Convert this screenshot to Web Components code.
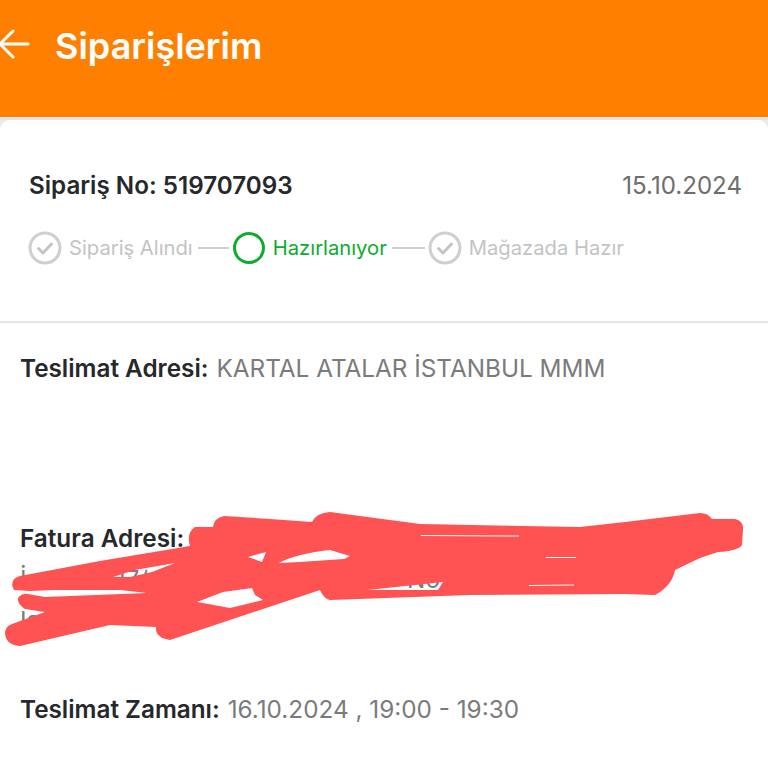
<!DOCTYPE html>
<html lang="tr">
<head>
<meta charset="utf-8">
<title>Siparişlerim</title>
<style>
  html, body { margin: 0; height: 100%; background: #fff; }
  body { font-family: Inter, "Liberation Sans", sans-serif; overflow: hidden; }
</style>
</head>
<body>
<app-page>
  <app-header>Siparişlerim</app-header>
  <order-summary number="519707093" date="15.10.2024">
    <order-step state="done">Sipariş Alındı</order-step>
    <order-step state="active" style="--join:31px">Hazırlanıyor</order-step>
    <order-step state="done">Mağazada Hazır</order-step>
  </order-summary>
  <order-info>
    <info-row label="Teslimat Adresi:" style="--row-height:170px">KARTAL ATALAR İSTANBUL MMM</info-row>
    <info-row label="Fatura Adresi:" style="--row-height:171px">
      <span style="display:flex;width:420px;justify-content:space-between"><span>İ</span><span style="margin-right:170px">17/</span><span>No</span></span>
      <span style="display:block">Is</span>
    </info-row>
    <info-row label="Teslimat Zamanı:">16.10.2024 , 19:00 - 19:30</info-row>
  </order-info>
  <scribble-mark></scribble-mark>
</app-page>

<script>
const check_icon = `
  <svg width="34" height="34" viewBox="0 0 34 34" fill="none">
    <circle cx="17" cy="17" r="15" stroke="#cfcfcf" stroke-width="3"/>
    <path d="M10.5 17.5l4.5 4.5 8.5-9" stroke="#c4c4c4" stroke-width="3" stroke-linecap="round" stroke-linejoin="round"/>
  </svg>`;
const ring_icon = `
  <svg width="34" height="34" viewBox="0 0 34 34" fill="none">
    <circle cx="17" cy="17" r="14.5" stroke="#0aad2c" stroke-width="3"/>
  </svg>`;

class AppPage extends HTMLElement {
  constructor() {
    super();
    this.attachShadow({ mode: "open" }).innerHTML = `
      <style>
        :host { display: block; position: relative; width: 768px; height: 768px; overflow: hidden; background: #fff; }
      </style>
      <slot></slot>`;
  }
}

class AppHeader extends HTMLElement {
  constructor() {
    super();
    this.attachShadow({ mode: "open" }).innerHTML = `
      <style>
        :host { display: block; }
        .bar {
          height: 117px; background: #ff8000; color: #fff;
          display: flex; align-items: flex-start; gap: 25px;
          padding: 24px 0 0 0; box-sizing: border-box;
        }
        svg { margin: 5px 0 0 -1px; flex: none; }
        h1 { margin: 0; font: 600 36px/44px Inter, "Liberation Sans", sans-serif; }
        .edge { height: 3px; background: #e4e4e4; }
      </style>
      <div class="bar">
        <svg width="31" height="30" viewBox="0 0 31 30" fill="none" stroke="#fff" stroke-width="3" stroke-linecap="round" stroke-linejoin="round">
          <path d="M29 15H1M14 2L1 15l13 13"/>
        </svg>
        <h1><slot></slot></h1>
      </div>
      <div class="edge"></div>`;
  }
}

class OrderSummary extends HTMLElement {
  constructor() {
    super();
    this.attachShadow({ mode: "open" }).innerHTML = `
      <style>
        :host { display: block; background: linear-gradient(#e9ecee 10px, #fff 10px); }
        .card {
          background: #fff; border-radius: 10px 10px 0 0;
          padding: 51px 26px 56px 29px; border-bottom: 2px solid #e4e4e4;
        }
        .top { display: flex; justify-content: space-between; line-height: 30px; font-size: 24.2px; }
        .no { font-weight: 600; color: #26282b; }
        .date { color: #6e6e6e; font-size: 24.1px; }
        .steps { display: flex; align-items: center; margin: 30px 0 0 -1px; }
      </style>
      <div class="card">
        <div class="top">
          <span class="no">Sipariş No: ${this.getAttribute("number")}</span>
          <span class="date">${this.getAttribute("date")}</span>
        </div>
        <div class="steps"><slot></slot></div>
      </div>`;
  }
}

class OrderStep extends HTMLElement {
  constructor() {
    super();
    const active = this.getAttribute("state") === "active";
    this.attachShadow({ mode: "open" }).innerHTML = `
      <style>
        :host { display: flex; align-items: center; font-size: 20.2px; color: ${active ? "#0aad2c" : "#c4c4c4"}; }
        :host(:not(:first-child))::before {
          content: ""; width: var(--join, 33px); height: 2px; background: #cfcfcf; margin: 0 3px 0 5px;
        }
        span { margin-left: 7px; line-height: 34px; }
        svg { display: block; }
      </style>
      ${active ? ring_icon : check_icon}
      <span><slot></slot></span>`;
  }
}

class OrderInfo extends HTMLElement {
  constructor() {
    super();
    this.attachShadow({ mode: "open" }).innerHTML = `
      <style>
        :host { display: block; padding: 25px 20px 0; }
      </style>
      <slot></slot>`;
  }
}

class InfoRow extends HTMLElement {
  constructor() {
    super();
    this.attachShadow({ mode: "open" }).innerHTML = `
      <style>
        :host { display: block; min-height: var(--row-height, 41px); font-size: 24.3px; line-height: 41px; color: #7b7b7b; }
        b { font-weight: 600; color: #26282b; margin-right: 8px; }
      </style>
      <b>${this.getAttribute("label")}</b><slot></slot>`;
  }
}

class ScribbleMark extends HTMLElement {
  constructor() {
    super();
    this.attachShadow({ mode: "open" }).innerHTML = `
      <style>
        :host { position: absolute; left: 0; top: 0; width: 768px; height: 768px; pointer-events: none; }
        svg { display: block; }
      </style>
      <svg width="768" height="768" viewBox="0 0 768 768">
        <path fill="#ff5252" fill-rule="evenodd" d="
          M13 581 Q14 578 20 576 L100 561 190 546 Q186 533 195 527 L213 527 Q214 518 224 516 L270 519 312 522
          Q316 513 330 512 L420 524 580 527 625 522 700 513 Q708 513 712 519 L735 519 Q744 521 743 530 L742 545
          Q738 551 718 552 L700 558 675 570 Q672 586 655 595 L625 594 470 595 330 600 Q324 599 320 590
          L170 640 Q155 638 156 627 L110 625 20 646 Q5 645 5 632 Q6 626 12 624 L45 612 25 609 Q17 604 18 598 Q22 593 28 594
          L45 597 147 593 L120 590 55 590 30 591 14 590 Q11 586 13 581Z
          M113 577 L135 570 175 563 152 572 130 577Z
          M248 557 L266 552 262 562Z
          M279 563 Q295 554 330 550 L350 556 344 559 300 562Z
          M197 602 L223 592 252 588 255 595 263 600 230 608Z
          M368 590 L443 582 438 590Z
          M421 535 L519 535.5 519 536.5 421 536Z
          M546 557 L576 557 576 558 546 558Z
          M529 585 L574 584.5 574 585.5 529 586Z"/>
      </svg>`;
  }
}

customElements.define("app-page", AppPage);
customElements.define("app-header", AppHeader);
customElements.define("order-summary", OrderSummary);
customElements.define("order-step", OrderStep);
customElements.define("order-info", OrderInfo);
customElements.define("info-row", InfoRow);
customElements.define("scribble-mark", ScribbleMark);
</script>
</body>
</html>
